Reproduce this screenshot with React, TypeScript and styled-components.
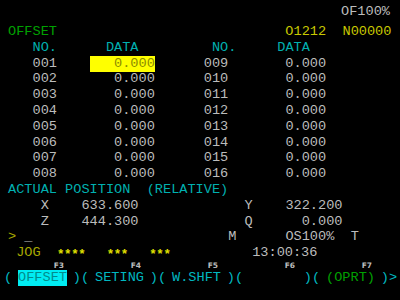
import React, { FC } from 'react';
import styled, { createGlobalStyle } from 'styled-components';

const GRAY = '#bcbcbc';
const CYAN = '#00b0b0';
const GREEN = '#00a000';
const YELLOW = '#c8c800';
const OLIVE = '#a8a800';

type Seg = [number, string, string?];

const GlobalStyle = createGlobalStyle`
    body {
        margin: 0;
        background: #000;
    }
`;

const Screen = styled.div`
    width: 400px;
    height: 300px;
    box-sizing: border-box;
    padding: 4px 0 0 8px;
    background: #000;
    color: ${GRAY};
    font-family: "Liberation Mono", "DejaVu Sans Mono", monospace;
    font-size: 13.6px;
    overflow: hidden;
`;

const StatusLine = styled.div`
    height: 16px;
    line-height: 16px;
    margin-bottom: 4px;
    padding-right: 10px;
    text-align: right;
`;

const Line = styled.div`
    height: 15.8px;
    line-height: 15.8px;
    white-space: pre;
`;

const Txt = styled.span<{ $c?: string }>`
    color: ${p => p.$c || GRAY};
`;

const Cursor = styled.span`
    display: inline-block;
    height: 16px;
    line-height: 16px;
    background: #ffff00;
    color: #8c8c00;
`;

const Stars = styled.span`
    display: inline-block;
    color: #e0e000;
    font-weight: bold;
    font-size: 12.5px;
    line-height: 1;
    letter-spacing: -0.4px;
    vertical-align: -2px;
`;

const SoftArea = styled.div`
    margin-left: -4px;
`;

const FKeys = styled.div`
    display: grid;
    grid-template-columns: repeat(5, 77px);
    height: 9px;
    line-height: 9px;
    font-family: "DejaVu Sans", sans-serif;
    font-size: 7.5px;
    font-weight: bold;
    color: ${GRAY};
`;

const FKey = styled.span`
    justify-self: end;
    padding-right: 17px;
`;

const Keys = styled.div`
    display: grid;
    grid-template-columns: repeat(5, 77px) auto;
    height: 16px;
    line-height: 16px;
    color: #00b8c0;
`;

const Key = styled.div`
    display: flex;
    justify-content: space-between;
    align-items: center;
`;

const KeyLabel = styled.span<{ $active?: boolean; $c?: string }>`
    display: inline-block;
    height: 16px;
    line-height: 16px;
    background: ${p => p.$active ? '#00ecf2' : 'transparent'};
    color: ${p => p.$active ? '#008c8c' : p.$c || '#00b8c0'};
`;

const pad = (col: number, at: number) => ' '.repeat(Math.max(0, at - col));

const Row: FC<{ segs: Seg[] }> = ({ segs }) => {
    let col = 0;
    return (
        <Line>
            {segs.map(([at, text, color], i) => {
                const gap = pad(col, at);
                col = at + text.length;
                return <Txt key={i} $c={color}>{gap + text}</Txt>;
            })}
        </Line>
    );
};

const offsets = [1, 2, 3, 4, 5, 6, 7, 8];
const num = (n: number) => String(n).padStart(3, '0');

const softkeys = [
    { label: 'OFFSET', active: true },
    { label: 'SETING' },
    { label: 'W.SHFT' },
    { label: '' },
    { label: '(OPRT)', color: GREEN },
];

const App: FC = () => {
    return (
        <>
            <GlobalStyle />
            <Screen>
                <StatusLine>OF100%</StatusLine>
                <Row segs={[[0, 'OFFSET', GREEN], [34, 'O1212', YELLOW], [41, 'N00000', YELLOW]]} />
                <Row segs={[[3, 'NO.', CYAN], [12, 'DATA', CYAN], [25, 'NO.', CYAN], [33, 'DATA', CYAN]]} />
                {offsets.map(n => n === 1 ? (
                    <Line key={n}>
                        <Txt>{pad(0, 3) + num(n) + pad(6, 10)}</Txt>
                        <Cursor>{'   0.000'}</Cursor>
                        <Txt>{pad(18, 24) + num(n + 8) + pad(27, 34) + '0.000'}</Txt>
                    </Line>
                ) : (
                    <Row key={n} segs={[[3, num(n)], [13, '0.000'], [24, num(n + 8)], [34, '0.000']]} />
                ))}
                <Row segs={[[0, 'ACTUAL POSITION  (RELATIVE)', CYAN]]} />
                <Row segs={[[4, 'X'], [9, '633.600'], [29, 'Y'], [34, '322.200']]} />
                <Row segs={[[4, 'Z'], [9, '444.300'], [29, 'Q'], [36, '0.000']]} />
                <Row segs={[[0, '>', OLIVE], [2, '_'], [27, 'M'], [34, 'OS100%'], [42, 'T']]} />
                <Line>
                    <Txt $c={OLIVE}>{' JOG  '}</Txt>
                    <Stars>{'****   ***   ***'}</Stars>
                    <Txt>{'          13:00:36'}</Txt>
                </Line>
                <SoftArea>
                    <FKeys>
                        {['F3', 'F4', 'F5', 'F6', 'F7'].map(f => <FKey key={f}>{f}</FKey>)}
                    </FKeys>
                    <Keys>
                        {softkeys.map((k, i) => (
                            <Key key={i}>
                                <span>(</span>
                                <KeyLabel $active={k.active} $c={k.color}>{k.label}</KeyLabel>
                                <span>)</span>
                            </Key>
                        ))}
                        <span>&gt;</span>
                    </Keys>
                </SoftArea>
            </Screen>
        </>
    );
};

export default App;
